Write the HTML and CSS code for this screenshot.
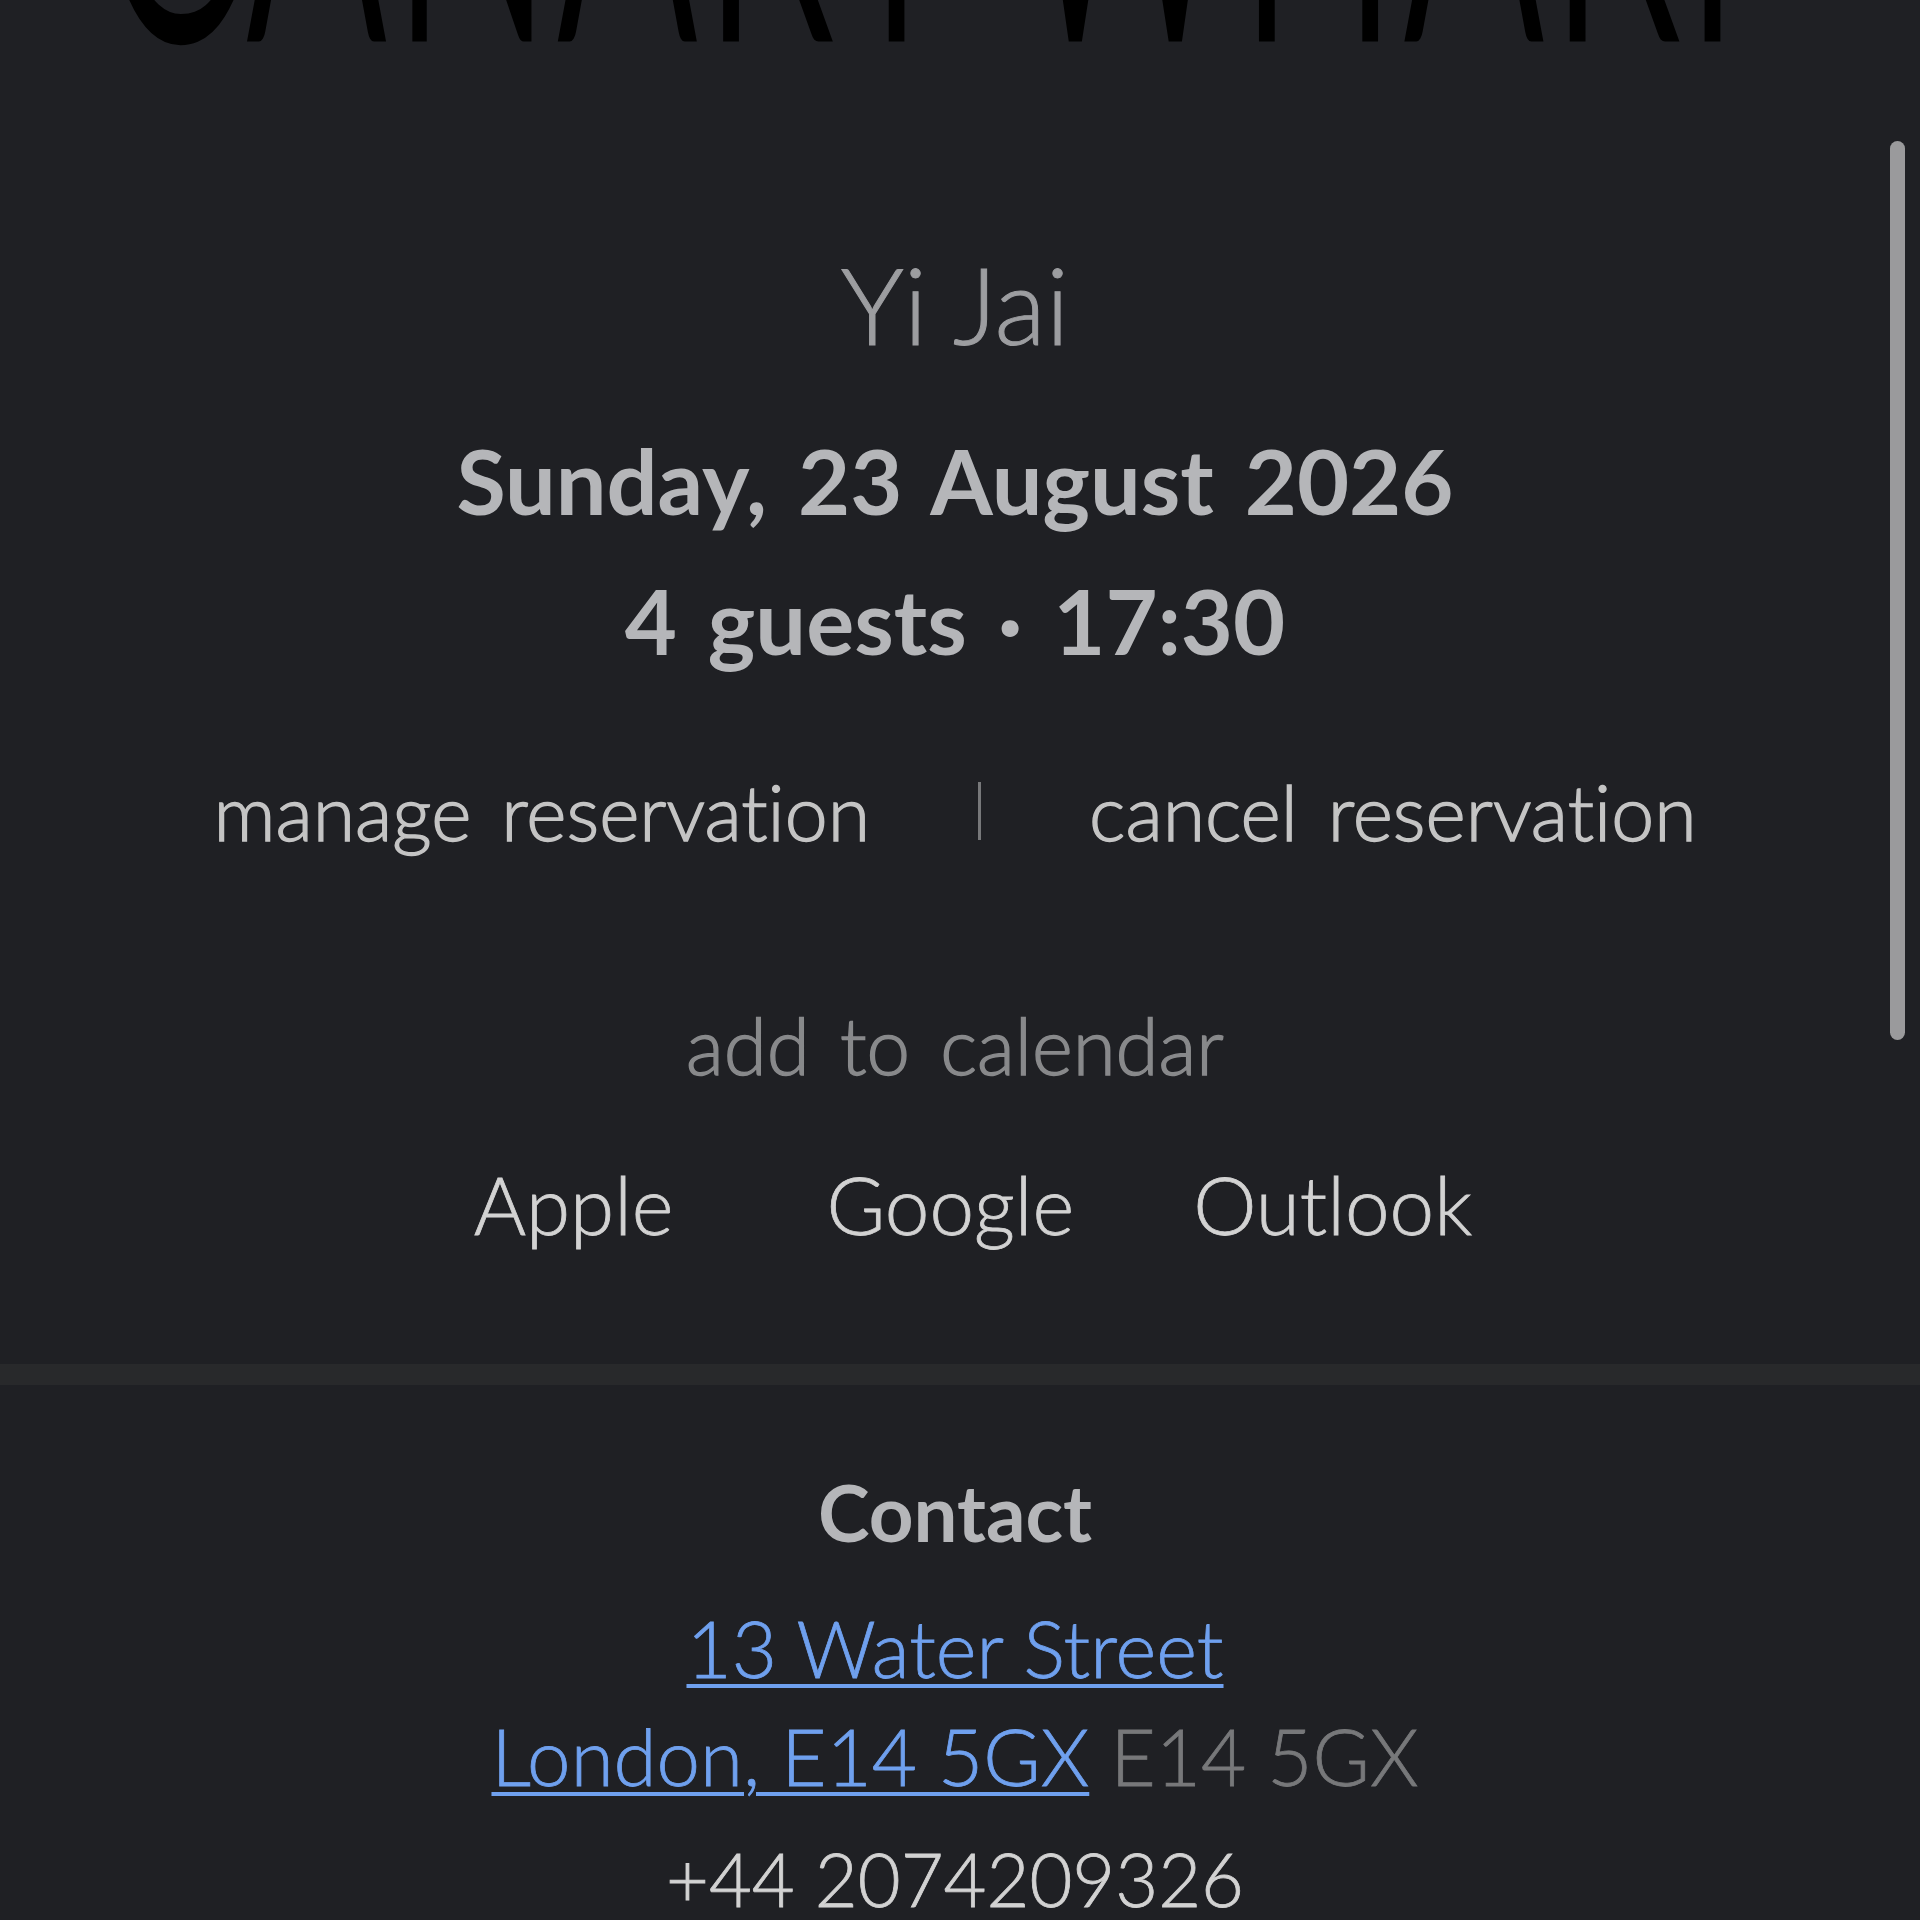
FILE: index.html
```html
<!DOCTYPE html>
<html>
  <head>
    <meta charset="UTF-8">
    <title>Reservation</title>
    <link rel="stylesheet" href="styles.css">
  </head>
  <body>
    <div class="screen">
      <div class="logo"><span class="logo-text">CANARY WHARF</span></div>

      <section class="booking">
        <h1 class="venue">Yi Jai</h1>
        <p class="summary">Sunday, 23 August 2026</p>
        <p class="summary">4 guests · 17:30</p>
        <div class="manage">
          <a href="#" class="manage-link">manage reservation</a>
          <span class="manage-sep"></span>
          <a href="#" class="manage-link">cancel reservation</a>
        </div>
        <p class="calendar-title">add to calendar</p>
        <div class="calendar">
          <a href="#" class="calendar-link">Apple</a>
          <a href="#" class="calendar-link">Google</a>
          <a href="#" class="calendar-link">Outlook</a>
        </div>
      </section>

      <div class="divider"></div>

      <section class="contact">
        <h2 class="contact-title">Contact</h2>
        <p class="address"><a href="#">13 Water Street</a></p>
        <p class="address"><a href="#">London, E14 5GX</a> <span class="postcode">E14 5GX</span></p>
        <p class="phone">+44 2074209326</p>
      </section>

      <div class="scrollbar"></div>
    </div>
  </body>
</html>
```

FILE: styles.css
```css
* { margin: 0; padding: 0; box-sizing: border-box; }
html, body { background: #1f2024; }
body { width: 1920px; height: 1920px; overflow: hidden; font-family: "Lato", "Noto Sans", sans-serif; font-variant-ligatures: none; }
a { color: inherit; text-decoration: none; }

.screen { position: relative; height: 1920px; overflow: hidden; }

/* wordmark is cut off by the top of the screen */
.logo { height: 50px; overflow: hidden; display: flex; align-items: flex-end; justify-content: center; padding-right: 10px; }
.logo-text { flex: none; font-size: 209px; line-height: 1; font-weight: 300; color: #000; -webkit-text-stroke: 5px #000; letter-spacing: 8px; margin-bottom: -10px; transform: scaleY(2.2); transform-origin: 50% 88.5%; }

.booking { display: flex; flex-direction: column; align-items: center; padding-top: 199px; padding-right: 10px; }
.venue { font-size: 106px; line-height: 110px; font-weight: 300; color: #9c9da0; -webkit-text-stroke: 1px #9c9da0; }
.summary { font-size: 90px; line-height: 140px; font-weight: 700; color: #b5b6b9; word-spacing: 9px; }
.summary:first-of-type { margin-top: 51px; }

.manage { display: flex; align-items: center; margin-top: 71px; font-size: 77px; line-height: 100px; font-weight: 300; color: #c4c4c4; -webkit-text-stroke: 1.4px #c4c4c4; word-spacing: 9px; }
.manage-sep { width: 3px; height: 58px; margin: 0 108px; background: #77787a; }

.calendar-title { margin-top: 134px; font-size: 78px; line-height: 100px; font-weight: 300; color: #88898b; -webkit-text-stroke: 1.4px #88898b; word-spacing: 9px; }
.calendar { display: flex; gap: 119px; margin-top: 59px; margin-left: 36px; font-size: 80px; line-height: 100px; font-weight: 300; color: #d2d2d2; -webkit-text-stroke: 0.8px #d2d2d2; }
.calendar-link:first-child { margin-right: 34px; }

.divider { height: 21px; margin-top: 110px; background: #28292b; }

.contact { display: flex; flex-direction: column; align-items: center; padding-top: 77px; padding-right: 10px; }
.contact-title { font-size: 78px; line-height: 100px; font-weight: 700; color: #b5b6b9; }
.address { font-size: 78px; line-height: 108px; font-weight: 300; color: #6fa0ee; -webkit-text-stroke: 0.8px #6fa0ee; }
.contact-title + .address { margin-top: 32px; }
.address a { text-decoration: underline; text-decoration-thickness: 4px; text-underline-offset: 6px; }
.postcode { color: #77787a; -webkit-text-stroke: 0.8px #77787a; }
.phone { margin-top: 15px; font-size: 74px; line-height: 108px; font-weight: 300; color: #d2d2d2; -webkit-text-stroke: 0.8px #d2d2d2; }

.scrollbar { position: absolute; top: 141px; left: 1890px; width: 15px; height: 899px; border-radius: 8px; background: #9a9a9c; }
```
